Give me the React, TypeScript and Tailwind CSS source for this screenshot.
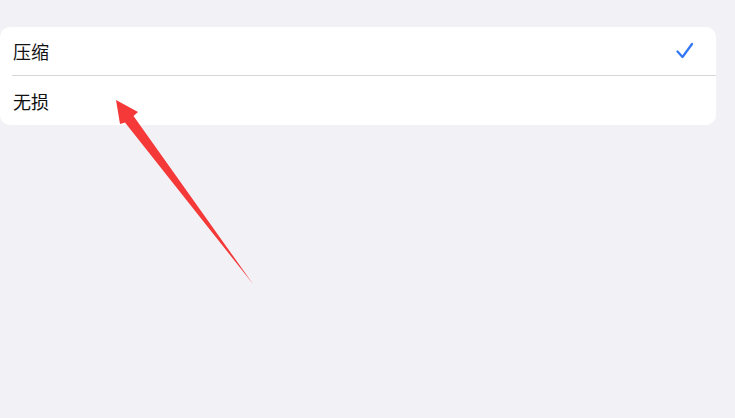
export default function App() {
  return (
    <div className="relative w-[735px] h-[418px] bg-[#f2f1f6] overflow-hidden" style={{ fontFamily: '"Noto Sans CJK SC", "Noto Sans", sans-serif' }}>
      <div className="pt-[27px] pr-[19px]">
        <div className="bg-white rounded-[10px] flex flex-col">
          <div className="h-[48px] flex items-center justify-between pl-[13px] pr-[20px]">
            <span className="text-[18px] text-[#111] leading-none">压缩</span>
            <svg width="20" height="20" viewBox="0 0 20 20" className="mr-[1px]">
              <path d="M2.5 10.5 L7.5 16 L17 3" fill="none" stroke="#3478f6" strokeWidth="2.3" strokeLinecap="round" strokeLinejoin="round" />
            </svg>
          </div>
          <div className="ml-[12px] h-px bg-[#d6d6da]" />
          <div className="h-[49px] flex items-center pl-[13px]">
            <span className="text-[18px] text-[#111] leading-none">无损</span>
          </div>
        </div>
      </div>
      <svg className="absolute left-0 top-0 pointer-events-none" width="735" height="418">
        <polygon points="116,100 138,112 133.5,116 253,284 125,122.5 120,124" fill="#f53838" />
      </svg>
    </div>
  );
}
